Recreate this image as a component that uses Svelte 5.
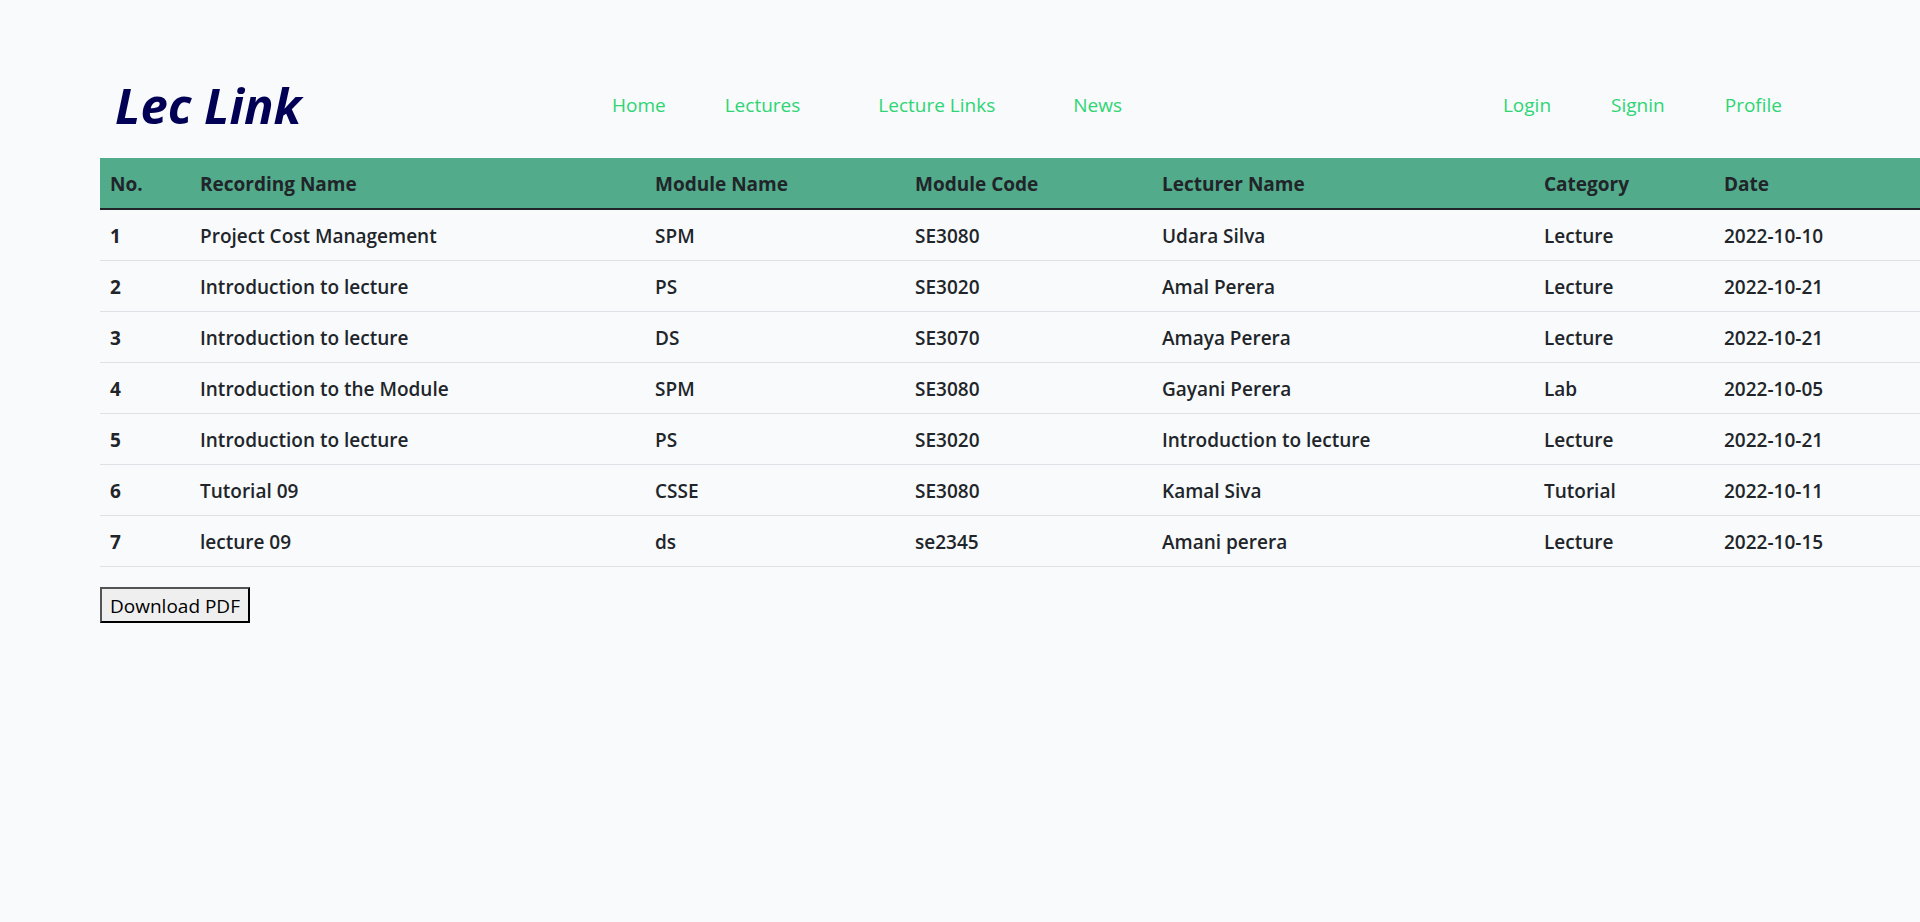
<script>
  const main = ['Home', 'Lectures', 'Lecture Links', 'News'];
  const account = ['Login', 'Signin', 'Profile'];
  const heads = ['No.', 'Recording Name', 'Module Name', 'Module Code', 'Lecturer Name', 'Category', 'Date'];
  const rows = [
    ['Project Cost Management', 'SPM', 'SE3080', 'Udara Silva', 'Lecture', '2022-10-10'],
    ['Introduction to lecture', 'PS', 'SE3020', 'Amal Perera', 'Lecture', '2022-10-21'],
    ['Introduction to lecture', 'DS', 'SE3070', 'Amaya Perera', 'Lecture', '2022-10-21'],
    ['Introduction to the Module', 'SPM', 'SE3080', 'Gayani Perera', 'Lab', '2022-10-05'],
    ['Introduction to lecture', 'PS', 'SE3020', 'Introduction to lecture', 'Lecture', '2022-10-21'],
    ['Tutorial 09', 'CSSE', 'SE3080', 'Kamal Siva', 'Tutorial', '2022-10-11'],
    ['lecture 09', 'ds', 'se2345', 'Amani perera', 'Lecture', '2022-10-15']
  ];
</script>

<div class="page">
  <header>
    <a class="logo" href="#home">Lec Link</a>
    <nav class="main" aria-label="Main">
      {#each main as item}<a class:wide={item === 'Lecture Links'} href="#{item}">{item}</a>{/each}
    </nav>
    <nav class="account" aria-label="Account">
      {#each account as item}<a href="#{item}">{item}</a>{/each}
    </nav>
  </header>
  <main>
    <table>
      <colgroup>
        <col class="no" /><col class="rec" /><col class="mod" /><col class="code" /><col class="lec" /><col class="cat" /><col />
      </colgroup>
      <thead>
        <tr>{#each heads as h}<th scope="col">{h}</th>{/each}</tr>
      </thead>
      <tbody>
        {#each rows as row, i}
          <tr><th scope="row">{i + 1}</th>{#each row as cell}<td>{cell}</td>{/each}</tr>
        {/each}
      </tbody>
    </table>
    <button type="button">Download PDF</button>
  </main>
</div>

<style>
  :global(body) { background: #f8fafc; overflow-x: hidden; }
  .page {
    box-sizing: border-box;
    padding: 73px 0 40px 100px;
    color: #212529;
    font: 19px/30px "Segoe UI", "Open Sans", "Noto Sans", sans-serif;
  }
  header { display: flex; align-items: center; height: 64px; padding: 0 138px 21px 15px; }
  a { color: #2ed573; text-decoration: none; white-space: nowrap; }
  .logo { width: 497px; color: #020055; font-size: 49px; line-height: 64px; font-weight: 700; font-style: italic; }
  nav { display: flex; gap: 59px; }
  .wide { margin: 0 19px; }
  .account { margin-left: auto; gap: 60px; }
  table { width: 100%; table-layout: fixed; border-collapse: collapse; }
  .no { width: 90px; } .rec { width: 455px; } .mod { width: 260px; }
  .code { width: 247px; } .lec { width: 382px; } .cat { width: 180px; }
  th, td { height: 30px; padding: 11px 10px 9px; border-bottom: 1px solid #dee2e6; text-align: left; white-space: nowrap; }
  td { font-weight: 600; }
  th { font-weight: 700; }
  thead th { background: #52ab8b; border-bottom: 2px solid #212529; }
  button { margin-top: 20px; padding: 2px 8px 0; border: 2px outset #000; background: #efefef; color: #000; font: inherit; }
</style>
